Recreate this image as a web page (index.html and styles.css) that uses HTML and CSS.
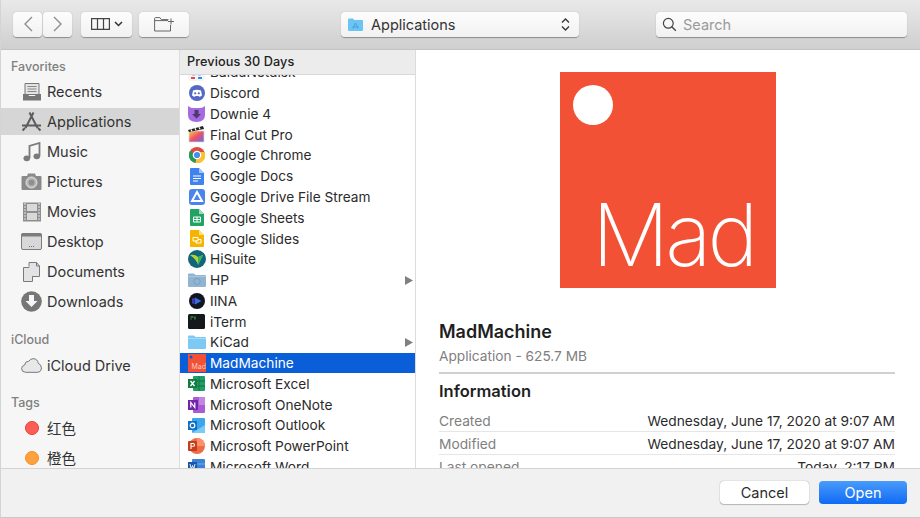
FILE: index.html
```html
<!DOCTYPE html>
<html lang="en">
<head>
    <meta charset="UTF-8">
    <meta name="viewport" content="width=device-width, initial-scale=1.0">
    <title>Open</title>
    <link rel="stylesheet" href="styles.css">
</head>
<body>
<div class="dialog">
    <div class="toolbar">
        <div class="tool-left">
            <div class="nav-group">
                <button class="tbtn nav-btn"><svg width="12" height="18" viewBox="0 0 12 18"><path d="M10 2 3 9l7 7" fill="none" stroke="#8d8d8d" stroke-width="1.4"/></svg></button>
                <button class="tbtn nav-btn"><svg width="12" height="18" viewBox="0 0 12 18"><path d="m2 2 7 7-7 7" fill="none" stroke="#8d8d8d" stroke-width="1.4"/></svg></button>
            </div>
            <button class="tbtn view-btn">
                <svg width="19" height="12" viewBox="0 0 19 12"><path d="M.6.6h17.8v10.8H.6zM6.5.6v10.8M12.5.6v10.8" fill="none" stroke="#444" stroke-width="1.2"/></svg>
                <svg width="9" height="6" viewBox="0 0 9 6"><path d="m1 1 3.5 3.5L8 1" fill="none" stroke="#333" stroke-width="1.5"/></svg>
            </button>
            <button class="tbtn folder-btn"><svg width="21" height="15" viewBox="0 0 21 15"><path d="M16.5 8v6H.6V1.6q0-1 1-1h4.2l1.5 2h7.2" fill="none" stroke="#666" stroke-width="1"/><path d="M.6 3.6h13.4M17 1.5v6M14 4.5h6" fill="none" stroke="#666" stroke-width="1"/></svg></button>
        </div>
        <div class="path-popup">
            <svg width="15" height="13" viewBox="0 0 15 13"><path d="M0 1.5q0-1 1-1h4l1.2 1.5H14q1 0 1 1V12q0 1-1 1H1q-1 0-1-1z" fill="#6cc4f5"/><path d="M4.8 10.5 7.5 5l2.7 5.5M4.5 9h6" fill="none" stroke="#3f9bd6" stroke-width=".8"/></svg>
            <span class="path-label">Applications</span>
            <svg width="9" height="15" viewBox="0 0 9 15"><path d="M1 5.500 4.500 2 8 5.500M1 9.500l3.500 3.500L8 9.500" fill="none" stroke="#333" stroke-width="1.3"/></svg>
        </div>
        <div class="search-box">
            <svg width="15" height="15" viewBox="0 0 15 15"><circle cx="6.3" cy="6.3" r="4.9" fill="none" stroke="#444" stroke-width="1.2"/><path d="m9.800 9.800 4 4" stroke="#444" stroke-width="1.4"/></svg>
            <span>Search</span>
        </div>
    </div>

    <div class="main">
        <div class="sidebar">
            <div class="side-title">Favorites</div>
            <div class="side-row">
                <svg width="20" height="20" viewBox="0 0 20 20"><path d="M3 1.500h14v11H3z" fill="#e4e4e4" stroke="#777"/><path d="M5.500 4.500h9M5.500 7h9M5.500 9.500h9" stroke="#888"/><path d="M1 12h5l1 2h6l1-2h5v6.500H1z" fill="#777"/></svg>
                <span>Recents</span>
            </div>
            <div class="side-row selected">
                <svg width="21" height="21" viewBox="0 0 21 21"><path d="M8.500 1.500 16.500 17M12.500 1.500 4.500 17M1 14.500h19" fill="none" stroke="#5c5c5c" stroke-width="2"/><path d="M1.500 19.500 4 17M19.500 19.500 17 17" stroke="#5c5c5c" stroke-width="2"/></svg>
                <span>Applications</span>
            </div>
            <div class="side-row">
                <svg width="18" height="20" viewBox="0 0 18 20"><path d="M6.500 16V4L16.500 1v13" fill="none" stroke="#7b7b7b" stroke-width="1.8"/><ellipse cx="3.8" cy="16.3" rx="3.3" ry="2.9" fill="#7b7b7b"/><ellipse cx="13.8" cy="14.3" rx="3.3" ry="2.9" fill="#7b7b7b"/></svg>
                <span>Music</span>
            </div>
            <div class="side-row">
                <svg width="21" height="20" viewBox="0 0 21 20"><path d="M.5 5q0-1 1-1H6l1-2.500h7L15 4h4.500q1 0 1 1v12q0 1-1 1h-18q-1 0-1-1z" fill="#8a8a8a"/><circle cx="10.5" cy="10.5" r="5.5" fill="#b9b9b9" stroke="#e2e2e2"/><circle cx="10.5" cy="10.5" r="3" fill="#8f8f8f"/></svg>
                <span>Pictures</span>
            </div>
            <div class="side-row">
                <svg width="20" height="20" viewBox="0 0 20 20"><rect x="1" y="0.5" width="18" height="19" fill="#8e8e8e"/><path d="M5 2h10v7H5zM5 11h10v7H5z" fill="#d9d9d9"/><path d="M2 2h2M2 5h2M2 8h2M2 11h2M2 14h2M2 17h2M16 2h2M16 5h2M16 8h2M16 11h2M16 14h2M16 17h2" stroke="#e6e6e6" stroke-width="1.2"/></svg>
                <span>Movies</span>
            </div>
            <div class="side-row">
                <svg width="21" height="17" viewBox="0 0 21 17"><rect x=".5" y=".5" width="20" height="16" rx="1.5" fill="#d8d8d8" stroke="#7d7d7d"/><rect x=".5" y=".5" width="20" height="3" fill="#7d7d7d"/><path d="M8 13.500h1M10 13.500h1M12 13.500h1" stroke="#777"/></svg>
                <span>Desktop</span>
            </div>
            <div class="side-row">
                <svg width="20" height="20" viewBox="0 0 20 20"><path d="M1.500 5.500h6l3 3v11h-9z" fill="#e3e3e3" stroke="#7a7a7a"/><path d="M10.500 14.500h7V4l-3-3.500H7v4" fill="#e3e3e3" stroke="#7a7a7a"/><path d="M14.500.5V4h3" fill="none" stroke="#7a7a7a"/></svg>
                <span>Documents</span>
            </div>
            <div class="side-row">
                <svg width="21" height="21" viewBox="0 0 21 21"><circle cx="10.5" cy="10.5" r="10.3" fill="#767676"/><path d="M8 4h5v6h3.500l-6 6-6-6H8z" fill="#f6f6f6"/></svg>
                <span>Downloads</span>
            </div>
            <div class="side-title cloud">iCloud</div>
            <div class="side-row">
                <svg width="21" height="15" viewBox="0 0 21 15"><path d="M4.500 14.300Q.6 14 .6 10.700q0-3 3-3.600Q4 3.200 7.800 3.200 9.300.7 12.300.7q4.200 0 5 4.700 3.100 1.100 3.100 4.500 0 4.400-4.400 4.400z" fill="#e8e8e8" stroke="#777"/></svg>
                <span>iCloud Drive</span>
            </div>
            <div class="side-title tags">Tags</div>
            <div class="side-row">
                <span class="tag-dot red"></span>
                <span class="cjk">红色</span>
            </div>
            <div class="side-row">
                <span class="tag-dot orange"></span>
                <span class="cjk">橙色</span>
            </div>
        </div>

        <div class="file-list">
            <div class="list-head">Previous 30 Days</div>
            <div class="list-rows">
                <div class="file-row">
                    <svg width="17" height="17" viewBox="0 0 17 17"><rect width="17" height="17" rx="4" fill="#f4f4f4"/><circle cx="5.5" cy="9" r="2.5" fill="#2d8cf0"/><circle cx="11.5" cy="9" r="2.5" fill="#2d8cf0"/><path d="M3 14h4" stroke="#e44" stroke-width="2"/><path d="M10 14h4" stroke="#2d8cf0" stroke-width="2"/></svg>
                    <span>BaiduNetdisk</span>
                </div>
                <div class="file-row">
                    <svg width="16" height="16" viewBox="0 0 16 16"><circle cx="8" cy="8" r="8" fill="#5468c4"/><path d="M4 5.500Q8 3.800 12 5.500l1 5q-1.500 1.200-3 1.200L9.500 11h-3l-.5.700q-1.500 0-3-1.200z" fill="#fff"/><circle cx="6.2" cy="8.3" r="1.1" fill="#5468c4"/><circle cx="9.8" cy="8.3" r="1.1" fill="#5468c4"/></svg>
                    <span>Discord</span>
                </div>
                <div class="file-row">
                    <svg width="17" height="17" viewBox="0 0 17 17"><path d="M0 1q3 2 4 2h9q1 0 4-2v9q0 7-8.500 7T0 10z" fill="#a66be0"/><path d="M6.500 5h4v4H13l-4.500 4.500L4 9h2.500z" fill="#4d3a6e"/></svg>
                    <span>Downie 4</span>
                </div>
                <div class="file-row">
                    <svg width="17" height="17" viewBox="0 0 17 17"><defs><linearGradient id="fcp" x1="0" y1="0" x2="1" y2="1"><stop offset="0" stop-color="#f7d23e"/><stop offset=".5" stop-color="#ee4f6a"/><stop offset="1" stop-color="#5a6cf0"/></linearGradient></defs><rect x="1" y="5" width="15" height="11" fill="url(#fcp)" stroke="#ddd" stroke-width=".7"/><path d="m0 4 15-4 1 3L1 6z" fill="#222"/><path d="m3 3.500 1 2M7 2.300l1 2M11 1.200l1 2" stroke="#fff" stroke-width="1.2"/></svg>
                    <span>Final Cut Pro</span>
                </div>
                <div class="file-row">
                    <svg width="16" height="16" viewBox="0 0 16 16"><circle cx="8" cy="8" r="8" fill="#dd4b3e"/><path d="M8 8 1 4a8 8 0 0 0 5.500 11.900z" fill="#1f9d55"/><path d="M8 8l-1.500 7.900A8 8 0 0 0 15.800 5H8z" fill="#fbc02d"/><circle cx="8" cy="8" r="3.7" fill="#4a8af4" stroke="#fff" stroke-width="1.2"/></svg>
                    <span>Google Chrome</span>
                </div>
                <div class="file-row">
                    <svg width="14" height="17" viewBox="0 0 14 17"><path d="M1 0h8l5 5v11q0 1-1 1H1q-1 0-1-1V1q0-1 1-1z" fill="#3f83ee"/><path d="M9 0v5h5z" fill="#a7c6f7"/><path d="M3 8h8M3 10.500h8M3 13h5" stroke="#fff"/></svg>
                    <span>Google Docs</span>
                </div>
                <div class="file-row">
                    <svg width="16" height="16" viewBox="0 0 16 16"><rect width="16" height="16" rx="3" fill="#4a85ec"/><path d="M8 3 3 12h10z" fill="none" stroke="#fff" stroke-width="2"/></svg>
                    <span>Google Drive File Stream</span>
                </div>
                <div class="file-row">
                    <svg width="14" height="17" viewBox="0 0 14 17"><path d="M1 0h8l5 5v11q0 1-1 1H1q-1 0-1-1V1q0-1 1-1z" fill="#1fa463"/><path d="M9 0v5h5z" fill="#a0d9bb"/><path d="M3.500 8h7v5h-7zM7 8v5M3.500 10.500h7" fill="none" stroke="#fff"/></svg>
                    <span>Google Sheets</span>
                </div>
                <div class="file-row">
                    <svg width="14" height="17" viewBox="0 0 14 17"><path d="M1 0h8l5 5v11q0 1-1 1H1q-1 0-1-1V1q0-1 1-1z" fill="#f4b400"/><path d="M9 0v5h5z" fill="#fbe08a"/><path d="M3 7.500h5v3.500H3zM6 10v3h5V9.500H8" fill="none" stroke="#fff"/></svg>
                    <span>Google Slides</span>
                </div>
                <div class="file-row">
                    <svg width="18" height="18" viewBox="0 0 18 18"><circle cx="9" cy="9" r="9" fill="#12657a"/><path d="M2 5q5-1 8 2l5-2-5 10q-1-5-8-10z" fill="#b5d334"/><path d="m10 7 5-2-5 10z" fill="#35b268"/></svg>
                    <span>HiSuite</span>
                </div>
                <div class="file-row">
                    <svg width="18" height="14" viewBox="0 0 18 14"><path d="M0 1.500q0-1 1-1h5l1.500 1.500H17q1 0 1 1V13q0 1-1 1H1q-1 0-1-1z" fill="#8fb5d3"/><path d="M0 3.500h18" stroke="#a9c8e0"/><circle cx="9" cy="8.5" r="3.2" fill="none" stroke="#7ba0bd"/></svg>
                    <span>HP</span>
                    <svg width="8" height="9" viewBox="0 0 8 9"><path d="M0 0v9l8-4.500z" fill="#808080"/></svg>
                </div>
                <div class="file-row">
                    <svg width="16" height="16" viewBox="0 0 16 16"><circle cx="8" cy="8" r="8" fill="#14161f"/><path d="M6 4.500 12.500 8 6 11.500z" fill="#2f6fe8"/><path d="M3.800 5.500v5M5 5v6" stroke="#5b4be0"/></svg>
                    <span>IINA</span>
                </div>
                <div class="file-row">
                    <svg width="17" height="15" viewBox="0 0 17 15"><rect width="17" height="15" rx="1.5" fill="#15191c"/><path d="M2.500 3h3M2.500 5h1M7 2.500v3" stroke="#4fc04f"/></svg>
                    <span>iTerm</span>
                </div>
                <div class="file-row">
                    <svg width="18" height="14" viewBox="0 0 18 14"><path d="M0 1.500q0-1 1-1h5l1.500 1.500H17q1 0 1 1V13q0 1-1 1H1q-1 0-1-1z" fill="#7cc9f4"/><path d="M0 3.500h18" stroke="#a6dcf9"/></svg>
                    <span>KiCad</span>
                    <svg width="8" height="9" viewBox="0 0 8 9"><path d="M0 0v9l8-4.500z" fill="#808080"/></svg>
                </div>
                <div class="file-row active">
                    <svg width="18" height="18" viewBox="0 0 18 18"><rect width="18" height="18" fill="#f05138"/><circle cx="3" cy="3" r="1.5" fill="#0a5ad8"/><text x="3.5" y="15" class="mad-small">Mad</text></svg>
                    <span>MadMachine</span>
                </div>
                <div class="file-row">
                    <svg width="17" height="15" viewBox="0 0 17 15"><rect x="5" width="12" height="15" rx="1" fill="#1f9d62"/><path d="M11 0v15" stroke="#15784a"/><path d="M5 5h12M5 10h12" stroke="#137347"/><rect y="3" width="9" height="9" fill="#107c41"/><path d="m2.500 5 4 5M6.500 5l-4 5" stroke="#fff" stroke-width="1.3"/></svg>
                    <span>Microsoft Excel</span>
                </div>
                <div class="file-row">
                    <svg width="17" height="16" viewBox="0 0 17 16"><rect x="5" width="12" height="16" rx="1" fill="#a85bd5"/><path d="M11 0h6v8h-6z" fill="#c088e0"/><rect y="3" width="10" height="10" fill="#7224a8"/><path d="M2.800 10.500v-5l4 5v-5" fill="none" stroke="#fff" stroke-width="1.2"/></svg>
                    <span>Microsoft OneNote</span>
                </div>
                <div class="file-row">
                    <svg width="17" height="15" viewBox="0 0 17 15"><rect x="4" width="13" height="15" rx="1" fill="#3ea6ea"/><path d="M4 15 17 7v7q0 1-1 1z" fill="#7fcaf5"/><rect y="3" width="9" height="9" fill="#0f6fc6"/><circle cx="4.500" cy="7.500" r="2.300" fill="none" stroke="#fff" stroke-width="1.2"/></svg>
                    <span>Microsoft Outlook</span>
                </div>
                <div class="file-row">
                    <svg width="17" height="16" viewBox="0 0 17 16"><circle cx="9" cy="8" r="8" fill="#ed6c47"/><path d="M9 0a8 8 0 0 1 8 8H9z" fill="#ff8f6b"/><rect y="3" width="9" height="10" rx="1" fill="#c43e1c"/><path d="M3 11V5.500h2q1.500 0 1.500 1.400T5 8.300H3" fill="none" stroke="#fff" stroke-width="1.1"/></svg>
                    <span>Microsoft PowerPoint</span>
                </div>
                <div class="file-row">
                    <svg width="17" height="15" viewBox="0 0 17 15"><rect x="4" width="13" height="15" rx="1" fill="#3c83d8"/><path d="M4 5h13" stroke="#72aaf0"/><rect y="3" width="9" height="9" fill="#1a56ad"/><path d="m2 5 1.200 5L4.500 6.500 5.800 10 7 5" fill="none" stroke="#fff" stroke-width=".9"/></svg>
                    <span>Microsoft Word</span>
                </div>
            </div>
        </div>

        <div class="preview">
            <svg class="app-icon" width="216" height="216" viewBox="0 0 216 216"><rect width="216" height="216" fill="#f25136"/><circle cx="33" cy="33" r="20" fill="#fff"/><text x="32" y="194" class="mad-big">Mad</text></svg>
            <div class="app-name">MadMachine</div>
            <div class="app-kind">Application - 625.7 MB</div>
            <div class="info-title">Information</div>
            <div class="info-row"><span class="info-key">Created</span><span>Wednesday, June 17, 2020 at 9:07 AM</span></div>
            <div class="info-row"><span class="info-key">Modified</span><span>Wednesday, June 17, 2020 at 9:07 AM</span></div>
            <div class="info-row"><span class="info-key">Last opened</span><span>Today, 2:17 PM</span></div>
        </div>
    </div>

    <div class="footer">
        <button class="foot-btn cancel">Cancel</button>
        <button class="foot-btn open">Open</button>
    </div>
</div>
</body>
</html>
```
FILE: styles.css
```css
* {
    box-sizing: border-box;
}
html, body {
    margin: 0;
    height: 100%;
    overflow: hidden;
}
body {
    font-family: Inter, "Noto Sans CJK SC", sans-serif;
    font-size: 14px;
    color: #2b2b2b;
    background-color: #fff;
}
.dialog {
    width: 920px;
    height: 518px;
    display: flex;
    flex-direction: column;
    border-left: 1px solid #d4d4d4;
    border-bottom: 1px solid #c8c8c8;
}
button {
    font-family: inherit;
    padding: 0;
    border: none;
}

/* toolbar */
.toolbar {
    height: 50px;
    flex-shrink: 0;
    display: flex;
    align-items: center;
    padding: 0 12px 1px 12px;
    background: linear-gradient(#e9e9e9, #cfcfcf);
    border-bottom: 1px solid #c4c4c4;
}
.tool-left {
    display: flex;
    gap: 7px;
    width: 328px;
}
.nav-group {
    display: flex;
    gap: 1px;
    margin-right: 2px;
}
.tbtn, .path-popup, .search-box {
    height: 25px;
    background: linear-gradient(#fdfdfd, #f1f1f1);
    border-radius: 4px;
    box-shadow: 0 0.5px 1px rgba(0, 0, 0, 0.35);
    display: flex;
    align-items: center;
    justify-content: center;
}
.nav-btn {
    width: 29px;
}
.view-btn {
    width: 51px;
    gap: 4px;
}
.folder-btn {
    width: 50px;
}
.path-popup {
    width: 238px;
    justify-content: flex-start;
    padding: 0 9px 0 7px;
    font-size: 14.5px;
    color: #333;
}
.path-label {
    margin-left: 8px;
    flex: 1;
}
.search-box {
    width: 251px;
    margin-left: 77px;
    justify-content: flex-start;
    padding-left: 6px;
    gap: 6px;
    font-size: 14.5px;
    color: #9a9a9a;
}

/* main area */
.main {
    flex: 1;
    display: flex;
    min-height: 0;
}
.sidebar {
    width: 179px;
    flex-shrink: 0;
    overflow: hidden;
    background-color: #f6f6f6;
    border-right: 1px solid #dcdcdc;
    padding-top: 9px;
}
.side-title {
    height: 15px;
    line-height: 15px;
    padding-left: 10px;
    margin: 0 0 4px;
    font-size: 12.5px;
    font-weight: 500;
    color: #808080;
}
.side-title.cloud {
    margin: 17px 0 5px;
}
.side-title.tags {
    margin: 16px 0 4px;
}
.side-row {
    height: 27px;
    margin-bottom: 3px;
    padding-left: 20px;
    display: grid;
    grid-template-columns: 21px 1fr;
    column-gap: 5px;
    align-items: center;
    justify-items: center;
    font-size: 14.5px;
    color: #333;
}
.side-row span:last-child {
    justify-self: start;
}
.side-row.selected {
    background-color: #d6d6d6;
}
.tag-dot {
    width: 14px;
    height: 14px;
    border-radius: 50%;
}
.tag-dot.red {
    background-color: #fc5d57;
    border: 1px solid #ee3d37;
}
.tag-dot.orange {
    background-color: #fda23f;
    border: 1px solid #f28f1f;
}
.cjk {
    font-family: "Noto Sans CJK SC", sans-serif;
    font-size: 14.5px;
}

/* file column */
.file-list {
    width: 236px;
    flex-shrink: 0;
    overflow: hidden;
    background-color: #fff;
    border-right: 1px solid #dcdcdc;
}
.list-head {
    position: relative;
    z-index: 1;
    height: 25px;
    line-height: 23px;
    padding-left: 7px;
    font-size: 12.7px;
    font-weight: 500;
    letter-spacing: 0.1px;
    color: #222;
    background-color: #ececec;
    border-bottom: 1px solid #d8d8d8;
}
.list-rows {
    margin-top: -13px;
}
.file-row {
    height: 20.77px;
    display: grid;
    grid-template-columns: 27px 1fr auto;
    align-items: center;
    justify-items: center;
    padding: 0 2px 0 3px;
    font-size: 13.7px;
    color: #2b2b2b;
}
.file-row span {
    justify-self: start;
    white-space: nowrap;
}
.file-row.active {
    background-color: #0a5fd9;
    color: #fff;
}
.mad-small {
    font-family: Inter, sans-serif;
    font-size: 7px;
    fill: #ffc9bd;
}

/* preview pane */
.preview {
    flex: 1;
    overflow: hidden;
    padding: 22px 25px 0 23px;
    background-color: #fff;
}
.app-icon {
    display: block;
    margin: 0 0 0 120.5px;
}
.mad-big {
    font-family: Inter, sans-serif;
    font-size: 86px;
    font-weight: 250;
    letter-spacing: -4px;
    fill: #fff;
}
.app-name {
    margin-top: 33px;
    font-size: 18px;
    font-weight: 600;
    line-height: 22px;
    color: #1f1f1f;
}
.app-kind {
    margin-top: 4px;
    padding-bottom: 7px;
    line-height: 18px;
    font-size: 13.7px;
    color: #808080;
    border-bottom: 2px solid #d0d0d0;
}
.info-title {
    margin-top: 7px;
    font-size: 16.5px;
    font-weight: 600;
    line-height: 20px;
    color: #1f1f1f;
}
.info-row {
    height: 23px;
    padding-top: 3px;
    display: flex;
    justify-content: space-between;
    line-height: 18px;
    font-size: 13.75px;
    color: #2b2b2b;
    border-bottom: 1px solid #e6e6e6;
}
.info-title + .info-row {
    margin-top: 8px;
}
.info-key {
    color: #808080;
}

/* footer */
.footer {
    height: 49px;
    flex-shrink: 0;
    display: flex;
    justify-content: flex-end;
    align-items: center;
    gap: 10px;
    padding: 0 13px 2px 0;
    background-color: #f1f1f1;
    border-top: 1px solid #d4d4d4;
}
.foot-btn {
    height: 23px;
    border-radius: 4px;
    font-size: 14.5px;
}
.cancel {
    width: 89px;
    background-color: #fff;
    color: #2b2b2b;
    box-shadow: 0 0 1px rgba(0, 0, 0, 0.5), 0 1px 1px rgba(0, 0, 0, 0.2);
}
.open {
    width: 88px;
    background: linear-gradient(#4a9bfb, #0f6bf5);
    color: #fff;
}
```
